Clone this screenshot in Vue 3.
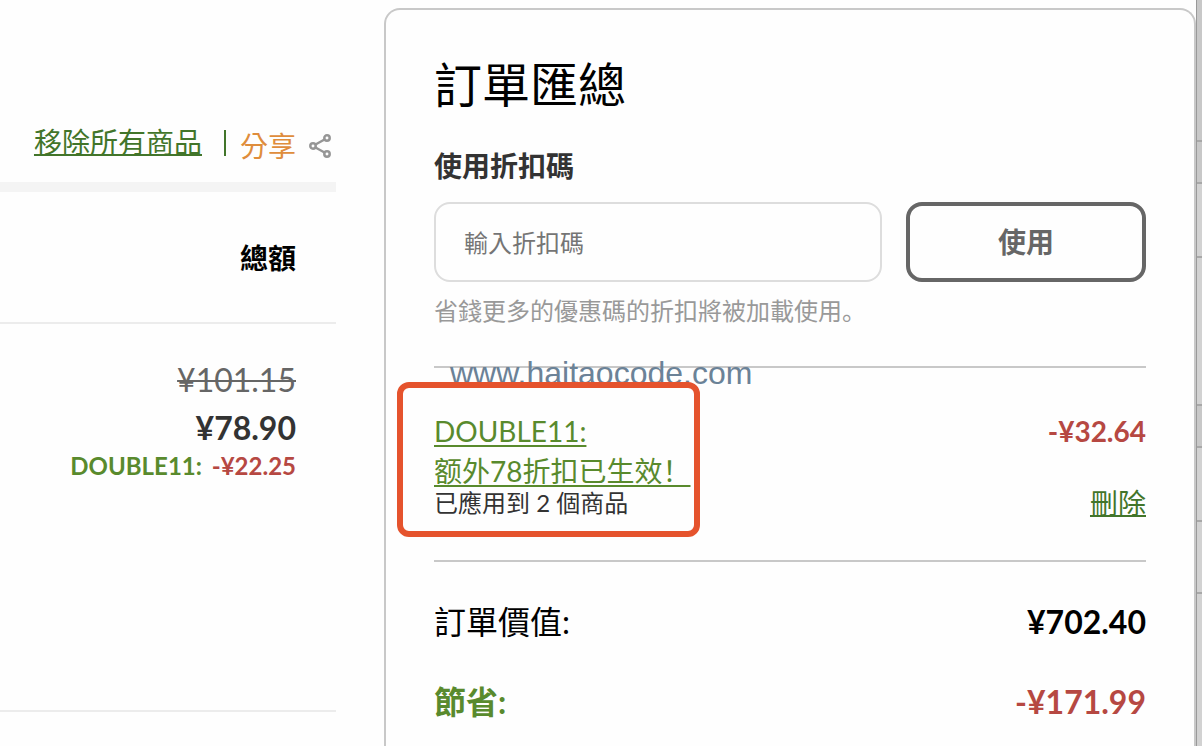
<script setup>
const rail = [
  { id: 'a', tone: 'mid' },
  { id: 'b', tone: 'mid' },
  { id: 'c', tone: 'light' },
  { id: 'd', tone: 'light' },
  { id: 'e', tone: 'mid' },
  { id: 'f', tone: 'light' },
  { id: 'g', tone: 'light' },
  { id: 'h', tone: 'light' }
]
</script>

<template>
  <main class="page">
    <section class="cart">
      <div class="actions">
        <a class="remove" href="#">移除所有商品</a>
        <span class="bar"></span>
        <a class="share" href="#">
          <span>分享</span>
          <svg viewBox="0 0 24 26" width="24" height="26" fill="none" stroke="#969696" stroke-width="2.5">
            <path d="M7.500 11.500 16.500 6.500M7.500 14.500 16.500 19.500" />
            <circle cx="5" cy="13" r="2.700" />
            <circle cx="19" cy="5" r="2.700" />
            <circle cx="19" cy="21" r="2.700" />
          </svg>
        </a>
      </div>
      <h2 class="total-head">總額</h2>
      <div class="prices">
        <del class="old">¥101.15</del>
        <strong class="now">¥78.90</strong>
        <p class="saving">DOUBLE11: <span class="minus">-¥22.25</span></p>
      </div>
    </section>

    <section class="card">
      <h1 class="title">訂單匯總</h1>
      <form class="coupon" @submit.prevent>
        <label class="label" for="code">使用折扣碼</label>
        <div class="row">
          <input id="code" class="field" type="text" placeholder="輸入折扣碼" />
          <button class="apply" type="submit">使用</button>
        </div>
        <p class="hint">省錢更多的優惠碼的折扣將被加載使用。</p>
      </form>

      <div class="promo">
        <div class="promo-line">
          <a class="code" href="#">DOUBLE11:<br />额外78折扣已生效！</a>
          <span class="promo-value">-¥32.64</span>
        </div>
        <div class="promo-foot">
          <span class="applied">已應用到 2 個商品</span>
          <a class="delete" href="#">刪除</a>
        </div>
        <span class="watermark">www.haitaocode.com</span>
        <span class="marker"></span>
      </div>

      <dl class="sums">
        <div class="sum">
          <dt>訂單價值:</dt>
          <dd>¥702.40</dd>
        </div>
        <div class="sum saved">
          <dt>節省:</dt>
          <dd>-¥171.99</dd>
        </div>
      </dl>
    </section>

    <div class="rail">
      <span v-for="r in rail" :key="r.id" :class="['cell', r.tone, 'cell-' + r.id]"></span>
    </div>
  </main>
</template>

<style>
body {
  margin: 0;
  background: #fefefe;
}
</style>

<style scoped>
* {
  box-sizing: border-box;
}
h1,
h2,
p,
dl,
dd {
  margin: 0;
}
a {
  text-decoration-thickness: 2px;
  text-decoration-skip-ink: none;
}
.page {
  display: flex;
  height: 100vh;
  overflow: hidden;
  font-family: Lato, "Noto Sans CJK TC", sans-serif;
  color: #333;
}
.cart {
  flex: 0 0 336px;
  margin-right: 48px;
  display: flex;
  flex-direction: column;
}
.actions {
  display: flex;
  align-items: center;
  justify-content: flex-end;
  height: 192px;
  padding: 106px 4px 0 0;
  border-bottom: 10px solid #f4f4f4;
  font-size: 28px;
  line-height: 40px;
}
.remove {
  color: #42752a;
  text-underline-offset: 1px;
  margin-bottom: 4px;
}
.bar {
  width: 2px;
  height: 26px;
  margin: 0 14px 2px 22px;
  background: #42752a;
}
.share {
  display: flex;
  align-items: center;
  gap: 12px;
  color: #df8d3c;
  text-decoration: none;
  padding-top: 4px;
}
.total-head {
  padding: 46px 40px 44px 0;
  border-bottom: 2px solid #ececec;
  font-size: 28px;
  line-height: 40px;
  font-weight: 700;
  color: #000;
  text-align: right;
}
.prices {
  display: flex;
  flex-direction: column;
  align-items: flex-end;
  height: 388px;
  padding: 32px 40px 0 0;
  border-bottom: 2px solid #ececec;
  font-size: 32px;
  line-height: 48px;
}
.old {
  color: #666;
  text-decoration-thickness: 2px;
}
.now {
  font-weight: 700;
}
.saving {
  font-size: 24px;
  line-height: 28px;
  font-weight: 700;
  color: #598a2d;
}
.minus {
  margin-left: 4px;
}
.minus,
.promo-value {
  color: #b64842;
}
.card {
  flex: 1;
  min-width: 0;
  margin-top: 8px;
  padding: 40px 48px 0;
  border: 2px solid #c8c8c8;
  border-bottom: 0;
  border-radius: 16px 16px 0 0;
}
.title {
  font-size: 48px;
  line-height: 70px;
  font-weight: 400;
  color: #000;
}
.label {
  display: block;
  margin-top: 26px;
  font-size: 28px;
  line-height: 40px;
  font-weight: 700;
}
.row {
  display: flex;
  gap: 24px;
  margin-top: 16px;
}
.field {
  flex: 1;
  min-width: 0;
  height: 80px;
  padding: 0 28px;
  border: 2px solid #ddd;
  border-radius: 16px;
  background: transparent;
  font: inherit;
  font-size: 24px;
}
.field::placeholder {
  color: #757575;
}
.apply {
  flex: 0 0 240px;
  padding: 0 0 2px;
  border: 4px solid #666;
  border-radius: 16px;
  background: transparent;
  font: inherit;
  font-size: 28px;
  font-weight: 700;
  color: #666;
}
.hint {
  margin-top: 13px;
  font-family: Lato, "Noto Sans CJK SC", sans-serif;
  font-size: 24px;
  line-height: 32px;
  color: #999;
}
.promo {
  position: relative;
  margin-top: 39px;
  padding-top: 43px;
  border-top: 2px solid #c8c8c8;
  border-bottom: 2px solid #c8c8c8;
}
.promo-line,
.promo-foot,
.sum {
  display: flex;
  justify-content: space-between;
}
.promo-line {
  font-size: 28px;
  line-height: 40px;
}
.code {
  font-family: Lato, "Noto Sans CJK SC", sans-serif;
  color: #598a2d;
  text-underline-offset: 3px;
}
.promo-value {
  font-weight: 700;
}
.promo-foot {
  height: 69px;
  line-height: 24px;
}
.applied {
  font-size: 24px;
}
.delete {
  font-size: 28px;
  color: #42752a;
  text-underline-offset: 1px;
}
.watermark {
  position: absolute;
  top: -15px;
  left: 16px;
  font-family: "Liberation Sans", sans-serif;
  font-size: 32px;
  line-height: 40px;
  color: #6b8297;
}
.marker {
  position: absolute;
  top: 14px;
  left: -37px;
  width: 303px;
  height: 155px;
  border: 6px solid #e5532d;
  border-radius: 12px;
}
.sums {
  padding-top: 36px;
}
.sum {
  margin-bottom: 32px;
  font-size: 32px;
  line-height: 48px;
  color: #000;
}
.sum dd {
  font-weight: 700;
}
.saved dt {
  font-weight: 700;
  color: #598a2d;
}
.saved dd {
  color: #b64842;
}
.rail {
  flex: 0 0 6px;
  display: flex;
  flex-direction: column;
  border-left: 1px solid #999;
}
.cell {
  border-bottom: 2px solid #a8a8a8;
}
.mid {
  background: #c8c8c8;
}
.light {
  background: #d2d2d2;
}
.cell-a {
  height: 142px;
}
.cell-b,
.cell-e {
  height: 42px;
}
.cell-c,
.cell-f {
  height: 74px;
}
.cell-d {
  height: 148px;
}
.cell-g {
  height: 72px;
}
.cell-h {
  flex: 1;
  border-bottom: 0;
}
</style>
